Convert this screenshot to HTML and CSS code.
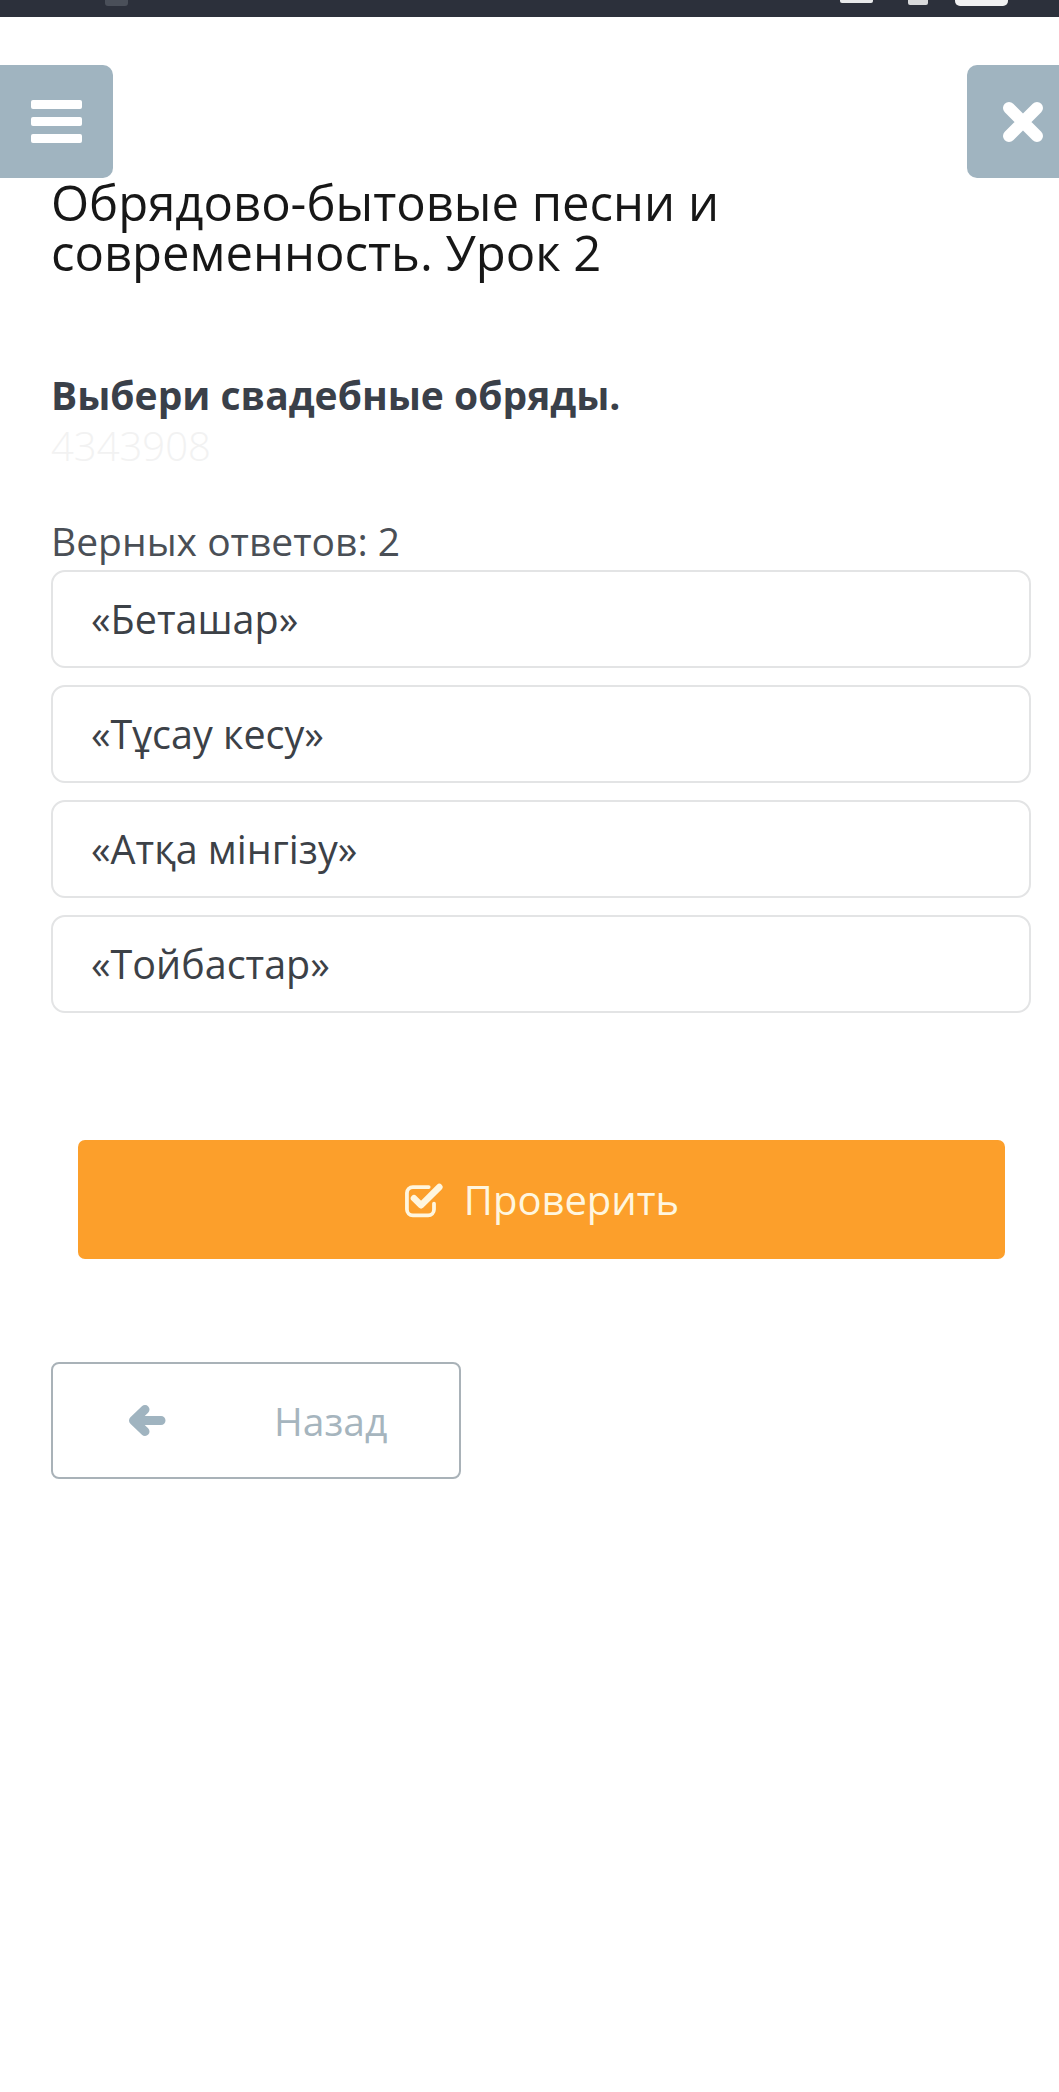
FILE: index.html
```html
<!DOCTYPE html>
<html lang="ru">
<head>
<meta charset="utf-8">
<title>Обрядово-бытовые песни и современность. Урок 2</title>
<link rel="stylesheet" href="styles.css">
</head>
<body>
<div class="statusbar">
  <span class="sb-left"></span>
  <span class="sb-fill"></span>
  <span class="sb-net"></span>
  <span class="sb-sig"></span>
  <span class="sb-bat"></span>
</div>
<div class="toolbar">
  <button class="tb-btn tb-menu" aria-label="Меню">
    <span class="bar"></span><span class="bar"></span><span class="bar"></span>
  </button>
  <button class="tb-btn tb-close" aria-label="Закрыть">
    <svg width="44" height="44" viewBox="0 0 44 44"><path d="M8 8 L36 36 M36 8 L8 36" stroke="#fff" stroke-width="12" stroke-linecap="round" fill="none"/></svg>
  </button>
</div>
<main class="content">
  <h1 class="title">Обрядово-бытовые песни и современность. Урок 2</h1>
  <p class="question">Выбери свадебные обряды.</p>
  <p class="qid">4343908</p>
  <p class="count">Верных ответов: 2</p>
  <ul class="options">
    <li class="option">«Беташар»</li>
    <li class="option">«Тұсау кесу»</li>
    <li class="option">«Атқа мінгізу»</li>
    <li class="option">«Тойбастар»</li>
  </ul>
  <div class="check-row">
    <button class="check-btn">
      <svg width="40" height="38" viewBox="0 0 34 32"><path d="M21 5 H7.5 a5 5 0 0 0 -5 5 V24 a5 5 0 0 0 5 5 H20.5 a5 5 0 0 0 5 -5 V19" stroke="currentColor" stroke-width="3.2" fill="none" stroke-linecap="round"/><path d="M8.5 14.5 L14.5 20.5 L30 5" stroke="currentColor" stroke-width="5.6" fill="none" stroke-linecap="round" stroke-linejoin="round"/></svg>
      <span>Проверить</span>
    </button>
  </div>
  <button class="back-btn">
    <svg width="38" height="33" viewBox="0 0 38 33"><path d="M6 16.5 H33 M17 5.5 L5.5 16.5 L17 27.5" stroke="currentColor" stroke-width="9" fill="none" stroke-linecap="round" stroke-linejoin="round"/></svg>
    <span>Назад</span>
  </button>
</main>
</body>
</html>
```
FILE: styles.css
```css
html, body {
  margin: 0;
  padding: 0;
  background: #ffffff;
}
body {
  font-family: "Open Sans", "Noto Sans", "Liberation Sans", sans-serif;
  color: #3c4147;
  width: 1059px;
  min-height: 2092px;
}

.statusbar {
  height: 17px;
  background: #2c303b;
  display: flex;
  align-items: flex-start;
  overflow: hidden;
}
.sb-left {
  width: 23px;
  height: 6px;
  margin-left: 105px;
  background: #4a4f59;
  border-radius: 0 0 3px 3px;
}
.sb-fill { flex: 1; }
.sb-net {
  width: 33px;
  height: 3px;
  background: #e8e9ea;
  border-radius: 0 0 2px 2px;
}
.sb-sig {
  width: 20px;
  height: 5px;
  margin-left: 35px;
  background: #d9dadc;
  border-radius: 0 0 2px 2px;
}
.sb-bat {
  width: 53px;
  height: 6px;
  margin-left: 27px;
  margin-right: 51px;
  background: #f1f1f2;
  border-radius: 0 0 5px 5px;
}

.toolbar {
  margin-top: 48px;
  height: 113px;
  display: flex;
  justify-content: space-between;
}
.tb-btn {
  border: 0;
  padding: 0;
  margin: 0;
  background: #a0b4c0;
  height: 113px;
  display: flex;
  align-items: center;
  justify-content: center;
  cursor: pointer;
}
.tb-menu {
  width: 113px;
  border-radius: 0 10px 10px 0;
  flex-direction: column;
  gap: 8px;
}
.tb-menu .bar {
  display: block;
  width: 51px;
  height: 9px;
  background: #ffffff;
  border-radius: 2px;
}
.tb-close {
  width: 92px;
  border-radius: 10px 0 0 10px;
  padding-left: 20px;
}

.content {
  padding: 0 28px 0 51px;
}

.title {
  margin: -1px 0 0;
  font-size: 49px;
  line-height: 50px;
  font-weight: 400;
  color: #171717;
}

.question {
  margin: 95px 0 0;
  font-size: 39px;
  line-height: 46px;
  font-weight: 700;
  color: #3a4049;
}

.qid {
  margin: 6px 0 0;
  font-size: 40px;
  line-height: 44px;
  font-weight: 300;
  color: #f2f2f2;
}

.count {
  margin: 50px 0 0;
  font-size: 39px;
  line-height: 46px;
  color: #4a4f56;
}

.options {
  list-style: none;
  margin: 6px 0 0;
  padding: 0;
  display: flex;
  flex-direction: column;
  gap: 17px;
}
.option {
  box-sizing: border-box;
  height: 98px;
  border: 2px solid #e3e4e5;
  border-radius: 14px;
  padding: 0 0 0 38px;
  display: flex;
  align-items: center;
  font-size: 39.5px;
  color: #3c4147;
}

.check-row {
  margin-top: 127px;
  padding: 0 26px 0 27px;
}
.check-btn {
  width: 100%;
  height: 119px;
  border: 0;
  border-radius: 7px;
  background: #fc9f2b;
  color: #fff6df;
  font-family: inherit;
  font-size: 40px;
  display: flex;
  align-items: center;
  justify-content: center;
  gap: 20px;
  cursor: pointer;
}

.back-btn {
  margin-top: 103px;
  box-sizing: border-box;
  width: 410px;
  height: 117px;
  border: 2px solid #a9b2b8;
  border-radius: 8px;
  background: #ffffff;
  color: #a0b4c0;
  font-family: inherit;
  font-size: 39px;
  display: flex;
  align-items: center;
  padding: 0 0 0 75px;
  gap: 108px;
  cursor: pointer;
}
.back-btn span {
  color: #a6b5be;
}
```
